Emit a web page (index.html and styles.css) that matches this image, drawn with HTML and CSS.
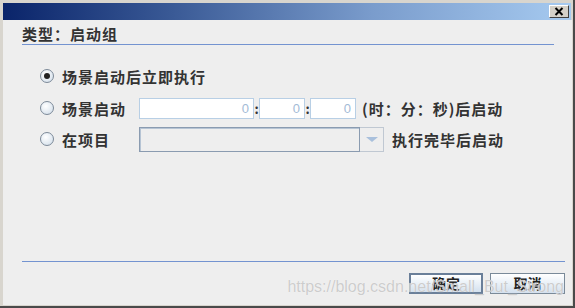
FILE: index.html
```html
<!DOCTYPE html>
<html lang="zh-CN">
	<head>
		<meta charset="UTF-8" />
		<meta name="viewport" content="width=device-width, initial-scale=1.0" />
		<title>启动组</title>
		<link rel="stylesheet" href="styles.css">
	</head>
	<body>
		<div class="frame">
			<div class="titlebar">
				<span class="close-btn">
					<svg width="10" height="9" viewBox="0 0 10 9">
						<path d="M1.5 1 L8.5 8 M8.5 1 L1.5 8" stroke="#000" stroke-width="2" fill="none" />
					</svg>
				</span>
			</div>
			<div class="dialog">
				<h1 class="heading">类型：启动组</h1>
				<div class="options">
					<div class="row row-first">
						<label class="opt">
							<span class="radio checked"></span>
							<span>场景启动后立即执行</span>
						</label>
					</div>
					<div class="row row-time">
						<label class="opt opt-fixed">
							<span class="radio"></span>
							<span>场景启动</span>
						</label>
						<input class="field field-h" type="text" value="0" />
						<span class="colon">:</span>
						<input class="field field-ms" type="text" value="0" />
						<span class="colon">:</span>
						<input class="field field-ms" type="text" value="0" />
						<span class="after">(时：分：秒)后启动</span>
					</div>
					<div class="row row-item">
						<label class="opt opt-fixed">
							<span class="radio"></span>
							<span>在项目</span>
						</label>
						<div class="combo">
							<div class="combo-field"></div>
							<div class="combo-arrow"><span class="tri"></span></div>
						</div>
						<span class="after after-wide">执行完毕后启动</span>
					</div>
				</div>
				<div class="footer">
					<button class="btn btn-default">确定</button>
					<button class="btn">取消</button>
				</div>
				<span class="watermark">https://blog.csdn.net/Small_But_Strong</span>
			</div>
		</div>
	</body>
</html>
```

FILE: styles.css
```css
body {
	margin: 0;
	font-family: "Noto Sans CJK SC", "Liberation Sans", sans-serif;
	color: #333;
}

.frame {
	box-sizing: border-box;
	width: 575px;
	height: 308px;
	background-color: #d8d5ce;
	padding: 3px 1px 1px 3px;
	border-right: 2px solid #4a4a4a;
	border-bottom: 2px solid #4a4a4a;
	display: flex;
	flex-direction: column;
}

.titlebar {
	height: 17px;
	margin-right: 1px;
	background: linear-gradient(to right, #0a246a, #3a5a96 30%, #7a9ccc 65%, #a6caf0);
	display: flex;
	justify-content: flex-end;
	align-items: center;
	padding-right: 2px;
}

.close-btn {
	box-sizing: border-box;
	width: 20px;
	height: 13px;
	background-color: #d4d0c8;
	border: 1px solid;
	border-color: #fff #404040 #404040 #fff;
	display: flex;
	align-items: center;
	justify-content: center;
}

.dialog {
	flex: 1;
	background-color: #eeeeee;
	display: flex;
	flex-direction: column;
	position: relative;
}

.heading {
	margin: 0 18px 0 19px;
	padding-top: 4px;
	height: 20px;
	line-height: 20px;
	font-size: 15px;
	font-weight: bold;
	letter-spacing: 1px;
	border-bottom: 1px solid #7393d0;
}

.options {
	margin-left: 37px;
	flex: 1;
	font-size: 15px;
	font-weight: bold;
	letter-spacing: 1px;
}

.row {
	display: flex;
	align-items: center;
}

.row-first {
	margin-top: 21px;
	height: 20px;
}

.row-time {
	margin-top: 11px;
	height: 22px;
}

.row-item {
	margin-top: 7px;
	height: 26px;
}

.opt {
	display: flex;
	align-items: center;
	gap: 8px;
}

.opt-fixed {
	width: 99px;
}

.radio {
	box-sizing: border-box;
	width: 14px;
	height: 14px;
	border-radius: 50%;
	border: 1px solid #7d8a99;
	background: radial-gradient(circle at 40% 35%, #ffffff, #dde6ef 70%, #b8c6d6);
	display: flex;
	align-items: center;
	justify-content: center;
}

.radio.checked::after {
	content: "";
	width: 6px;
	height: 6px;
	border-radius: 50%;
	background-color: #222;
}

.field {
	box-sizing: border-box;
	height: 21px;
	border: 1px solid #b8cfe5;
	background-color: #fff;
	text-align: right;
	padding: 0 4px;
	font-family: "Liberation Sans", sans-serif;
	font-size: 13px;
	color: #a3bbd6;
	margin: 0;
}

.field-h {
	width: 115px;
}

.field-ms {
	width: 46px;
}

.colon {
	width: 5px;
	text-align: center;
	font-size: 13px;
	letter-spacing: 0;
}

.after {
	margin-left: 6px;
}

.after-wide {
	margin-left: 8px;
}

.combo {
	display: flex;
	height: 25px;
}

.combo-field {
	box-sizing: border-box;
	width: 221px;
	height: 25px;
	border: 1px solid #8a9bb0;
	box-shadow: inset 1px 1px 0 #b6c4d4;
	background-color: #eeeeee;
}

.combo-arrow {
	box-sizing: border-box;
	width: 24px;
	height: 25px;
	border: 1px solid #c0c8d2;
	border-left: none;
	display: flex;
	align-items: center;
	justify-content: center;
}

.tri {
	width: 0;
	height: 0;
	border-left: 6px solid transparent;
	border-right: 6px solid transparent;
	border-top: 5px solid #a9c0dc;
}

.footer {
	margin: 0 7px 0 19px;
	border-top: 1px solid #7393d0;
	padding: 11px 0 0;
	height: 32px;
	display: flex;
	justify-content: flex-end;
	gap: 7px;
}

.btn {
	box-sizing: border-box;
	width: 75px;
	height: 21px;
	border: 1px solid #7a8a99;
	background: linear-gradient(to bottom, #ffffff, #e9f0f7 50%, #d3e0ee);
	font-family: "Noto Sans CJK SC", sans-serif;
	font-size: 14px;
	font-weight: bold;
	line-height: 17px;
	color: #222;
	padding: 0;
}

.btn-default {
	width: 74px;
	border: 2px solid #6a7f99;
}

.watermark {
	position: absolute;
	right: 8px;
	bottom: 9px;
	font-family: "Liberation Sans", sans-serif;
	font-size: 16px;
	color: rgba(196, 196, 196, 0.85);
	text-shadow: 0 0 1px rgba(255, 255, 255, 0.9);
	pointer-events: none;
}
```
